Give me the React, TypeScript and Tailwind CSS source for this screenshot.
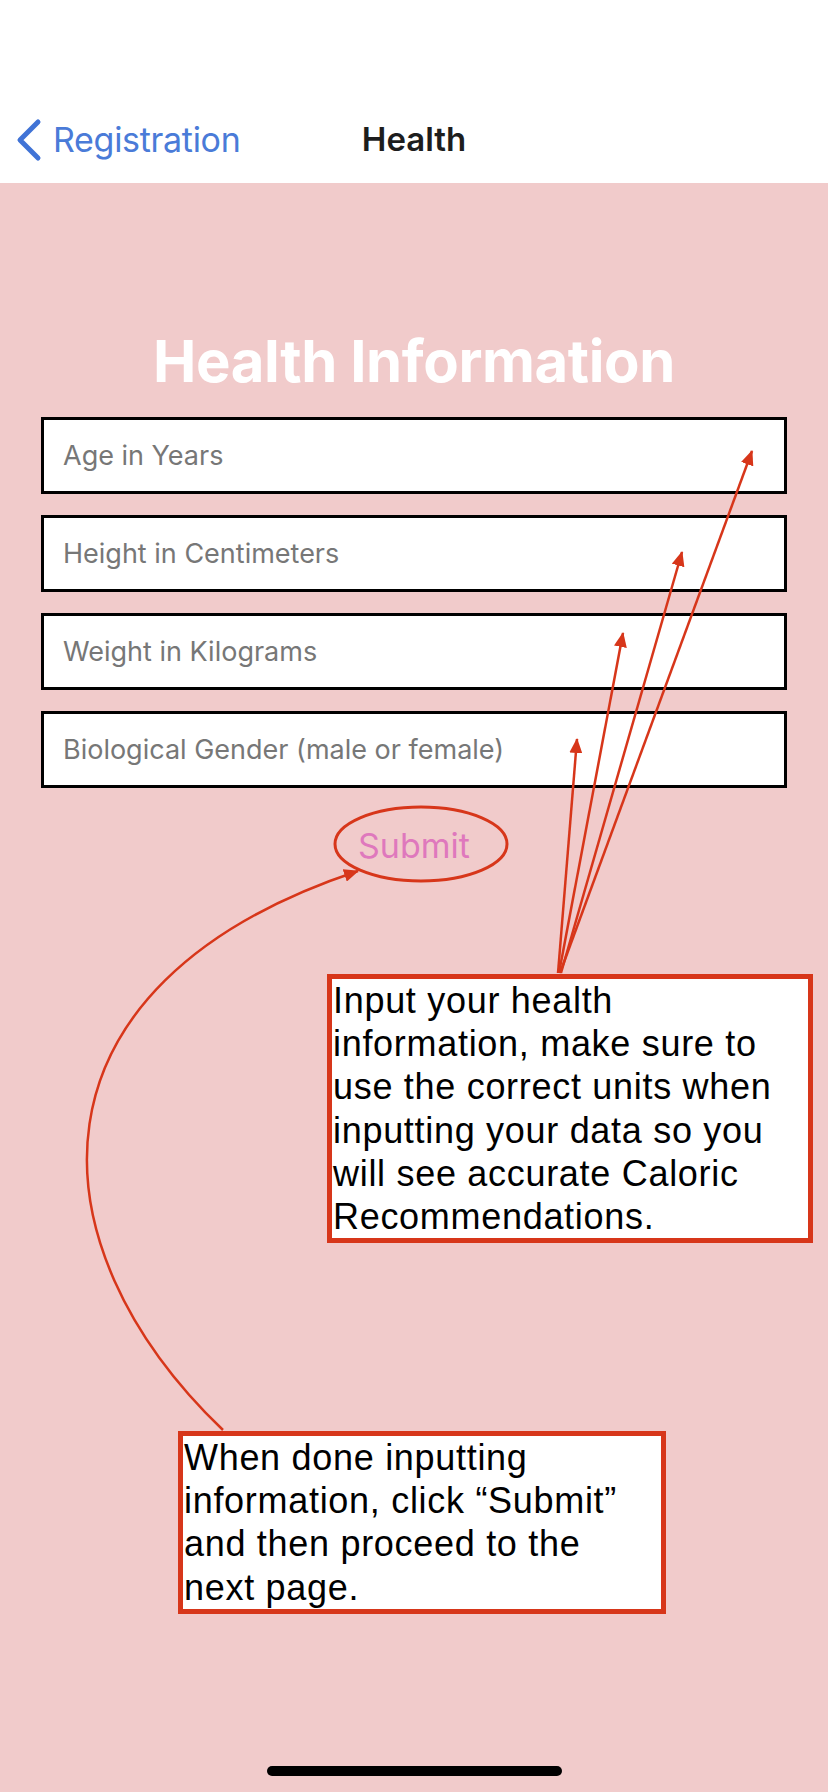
import React from 'react';

const RED = '#d7361a';

const fields = [
	'Age in Years',
	'Height in Centimeters',
	'Weight in Kilograms',
	'Biological Gender (male or female)',
];

const tipLines = [
	[560, 973, 752, 451],
	[561, 973, 682, 552],
	[559, 973, 623, 633],
	[558, 973, 577, 739],
];

// annotation layer drawn over the screen (arrows + ellipse)
function Annotations() {
	return (
		<svg
			className="pointer-events-none absolute left-0 top-0"
			width="828"
			height="1792"
			viewBox="0 0 828 1792">
			<defs>
				<marker
					id="tip"
					markerUnits="userSpaceOnUse"
					markerWidth="15"
					markerHeight="13"
					refX="14"
					refY="6.5"
					orient="auto">
					<path d="M0 0 L15 6.5 L0 13 Z" fill={RED} />
				</marker>
			</defs>
			{tipLines.map(([x1, y1, x2, y2], i) => (
				<line
					key={i}
					x1={x1}
					y1={y1}
					x2={x2}
					y2={y2}
					stroke={RED}
					strokeWidth="2.5"
					markerEnd="url(#tip)"
				/>
			))}
			<path
				d="M223 1430 C30 1245 15 985 358 871"
				fill="none"
				stroke={RED}
				strokeWidth="2.5"
				markerEnd="url(#tip)"
			/>
			<ellipse cx="421" cy="844" rx="86" ry="37" fill="none" stroke={RED} strokeWidth="3" />
		</svg>
	);
}

function Callout({ className, lines }: { className: string; lines: string[] }) {
	return (
		<div
			className={`absolute border-[5px] border-[#d7361a] bg-white pl-[1px] font-['Liberation_Sans',Arial,sans-serif] text-[36px] leading-[43.2px] tracking-[0.7px] text-black ${className}`}>
			{lines.map((l) => (
				<div key={l} className="whitespace-nowrap">
					{l}
				</div>
			))}
		</div>
	);
}

export default function App() {
	return (
		<div className="relative flex min-h-[1792px] w-full flex-col overflow-hidden bg-[#f1cbcb] font-['Inter',sans-serif]">
			{/* STATUS + NAV BAR */}
			<header className="bg-white">
				<div className="h-[96px]" />
				<div className="grid h-[87px] grid-cols-[1fr_auto_1fr] items-center">
					<button className="flex items-center pl-[14px] text-[#4a7bd8]">
						<svg width="30" height="44" viewBox="0 0 30 44">
							<path
								d="M24 4 L6 22 L24 40"
								fill="none"
								stroke="#4073d6"
								strokeWidth="5"
								strokeLinecap="round"
								strokeLinejoin="round"
							/>
						</svg>
						<span className="ml-[9px] text-[34px] tracking-[-0.3px]">Registration</span>
					</button>
					<h1 className="text-[33px] font-semibold text-[#1d1d1d]">Health</h1>
					<div />
				</div>
			</header>

			{/* FORM */}
			<main className="flex flex-1 flex-col items-center">
				<h2 className="mt-[149px] text-[58px] font-bold leading-none tracking-[-0.4px] text-white">
					Health Information
				</h2>
				<div className="mt-[27px] flex w-[746px] flex-col gap-[21px]">
					{fields.map((f) => (
						<input
							key={f}
							placeholder={f}
							className="h-[77px] w-full border-[3px] border-black bg-white pl-[19px] text-[27px] text-black outline-none placeholder:text-[#777777]"
						/>
					))}
				</div>
				<button className="mt-[38px] text-[34px] leading-[40px] text-[#df78bd]">Submit</button>
				<div className="mb-[16px] mt-auto h-[10px] w-[295px] rounded-full bg-black" />
			</main>

			<Annotations />
			<Callout
				className="left-[327px] top-[974px] w-[486px]"
				lines={[
					'Input your health',
					'information, make sure to',
					'use the correct units when',
					'inputting your data so you',
					'will see accurate Caloric',
					'Recommendations.',
				]}
			/>
			<Callout
				className="left-[178px] top-[1431px] w-[488px]"
				lines={[
					'When done inputting',
					'information, click \u201cSubmit\u201d',
					'and then proceed to the',
					'next page.',
				]}
			/>
		</div>
	);
}
